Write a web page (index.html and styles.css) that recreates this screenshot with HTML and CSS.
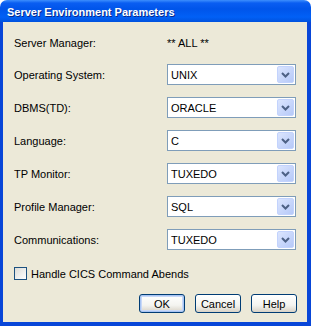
FILE: index.html
```html
<!DOCTYPE html>
<html lang="en">
<head>
<meta charset="UTF-8">
<meta name="viewport" content="width=device-width, initial-scale=1.0">
<title>Server Environment Parameters</title>
<link rel="stylesheet" href="styles.css">
</head>
<body>
<div class="window">
    <div class="titlebar">
        <span class="title">Server Environment Parameters</span>
    </div>
    <div class="client">
        <div class="fields">
            <div class="row first">
                <span class="label">Server Manager:</span>
                <span class="value">** ALL **</span>
            </div>
            <div class="row">
                <span class="label">Operating System:</span>
                <div class="combo"><span class="combo-text">UNIX</span><span class="combo-btn"><svg width="15" height="15" viewBox="0 0 15 15"><path d="M4 6 L7.5 9.5 L11 6" fill="none" stroke="#4d6185" stroke-width="2"/></svg></span></div>
            </div>
            <div class="row">
                <span class="label">DBMS(TD):</span>
                <div class="combo"><span class="combo-text">ORACLE</span><span class="combo-btn"><svg width="15" height="15" viewBox="0 0 15 15"><path d="M4 6 L7.5 9.5 L11 6" fill="none" stroke="#4d6185" stroke-width="2"/></svg></span></div>
            </div>
            <div class="row">
                <span class="label">Language:</span>
                <div class="combo"><span class="combo-text">C</span><span class="combo-btn"><svg width="15" height="15" viewBox="0 0 15 15"><path d="M4 6 L7.5 9.5 L11 6" fill="none" stroke="#4d6185" stroke-width="2"/></svg></span></div>
            </div>
            <div class="row">
                <span class="label">TP Monitor:</span>
                <div class="combo"><span class="combo-text">TUXEDO</span><span class="combo-btn"><svg width="15" height="15" viewBox="0 0 15 15"><path d="M4 6 L7.5 9.5 L11 6" fill="none" stroke="#4d6185" stroke-width="2"/></svg></span></div>
            </div>
            <div class="row">
                <span class="label">Profile Manager:</span>
                <div class="combo"><span class="combo-text">SQL</span><span class="combo-btn"><svg width="15" height="15" viewBox="0 0 15 15"><path d="M4 6 L7.5 9.5 L11 6" fill="none" stroke="#4d6185" stroke-width="2"/></svg></span></div>
            </div>
            <div class="row">
                <span class="label">Communications:</span>
                <div class="combo"><span class="combo-text">TUXEDO</span><span class="combo-btn"><svg width="15" height="15" viewBox="0 0 15 15"><path d="M4 6 L7.5 9.5 L11 6" fill="none" stroke="#4d6185" stroke-width="2"/></svg></span></div>
            </div>
        </div>
        <div class="check">
            <span class="box"></span>
            <span>Handle CICS Command Abends</span>
        </div>
        <div class="buttons">
            <button class="btn default">OK</button>
            <button class="btn">Cancel</button>
            <button class="btn">Help</button>
        </div>
    </div>
</div>
</body>
</html>
```

FILE: styles.css
```css
body {
    margin: 0;
    background: #ffffff;
    font-family: "Liberation Sans", Arial, sans-serif;
    font-size: 11px;
    color: #000;
}

.window {
    width: 311px;
    height: 326px;
    display: flex;
    flex-direction: column;
}

/*------------------ Title bar ---------------------- */
.titlebar {
    height: 22px;
    display: flex;
    align-items: center;
    padding-left: 7px;
    border-radius: 7px 7px 0 0;
    background: linear-gradient(to bottom, #3d8ffd 0, #0a5ef2 3px, #0055ea 9px, #0160f6 17px, #0052de 22px);
}

.title {
    color: #fff;
    font-weight: bold;
    font-size: 11px;
    text-shadow: 1px 1px 0 #0a2a8a;
    padding-top: 2px;
}

/*------------------ Client area ---------------------- */
.client {
    flex: 1;
    background: #ece9d8;
    border-style: solid;
    border-color: #0846d8;
    border-width: 0 4px 4px 3px;
    display: flex;
    flex-direction: column;
}

.fields {
    padding: 6px 0 0 11px;
}

.row {
    display: grid;
    grid-template-columns: 153px 129px;
    align-items: center;
    height: 33px;
}

.row.first {
    height: 30px;
}

.combo {
    height: 21px;
    box-sizing: border-box;
    border: 1px solid #7f9db9;
    background: #fff;
    display: flex;
    align-items: stretch;
    padding: 1px;
}

.combo-text {
    flex: 1;
    display: flex;
    align-items: center;
    padding-left: 2px;
}

.combo-btn {
    width: 17px;
    box-sizing: border-box;
    border: 1px solid #c3d3fd;
    border-radius: 2px;
    background: linear-gradient(135deg, #dbe5fe, #b6c9f8);
    display: flex;
    align-items: center;
    justify-content: center;
}

/*------------------ Checkbox ---------------------- */
.check {
    display: flex;
    align-items: center;
    gap: 4px;
    margin: 11px 0 0 11px;
}

.box {
    width: 13px;
    height: 13px;
    box-sizing: border-box;
    border: 1px solid #1c5180;
    background: linear-gradient(135deg, #dcdcd7, #ffffff);
}

/*------------------ Buttons ---------------------- */
.buttons {
    display: flex;
    justify-content: flex-end;
    gap: 10px;
    margin-top: 14px;
    padding-right: 10px;
}

.btn {
    width: 46px;
    height: 19px;
    padding: 0;
    font-family: inherit;
    font-size: 11px;
    color: #000;
    border: 1px solid #003c74;
    border-radius: 3px;
    background: linear-gradient(to bottom, #ffffff, #f4f4f0 60%, #d8d2c6);
}

.btn.default {
    box-shadow: inset 0 0 0 1px #a8c4f3, inset 0 0 0 2px #c8d8f7;
}
```
